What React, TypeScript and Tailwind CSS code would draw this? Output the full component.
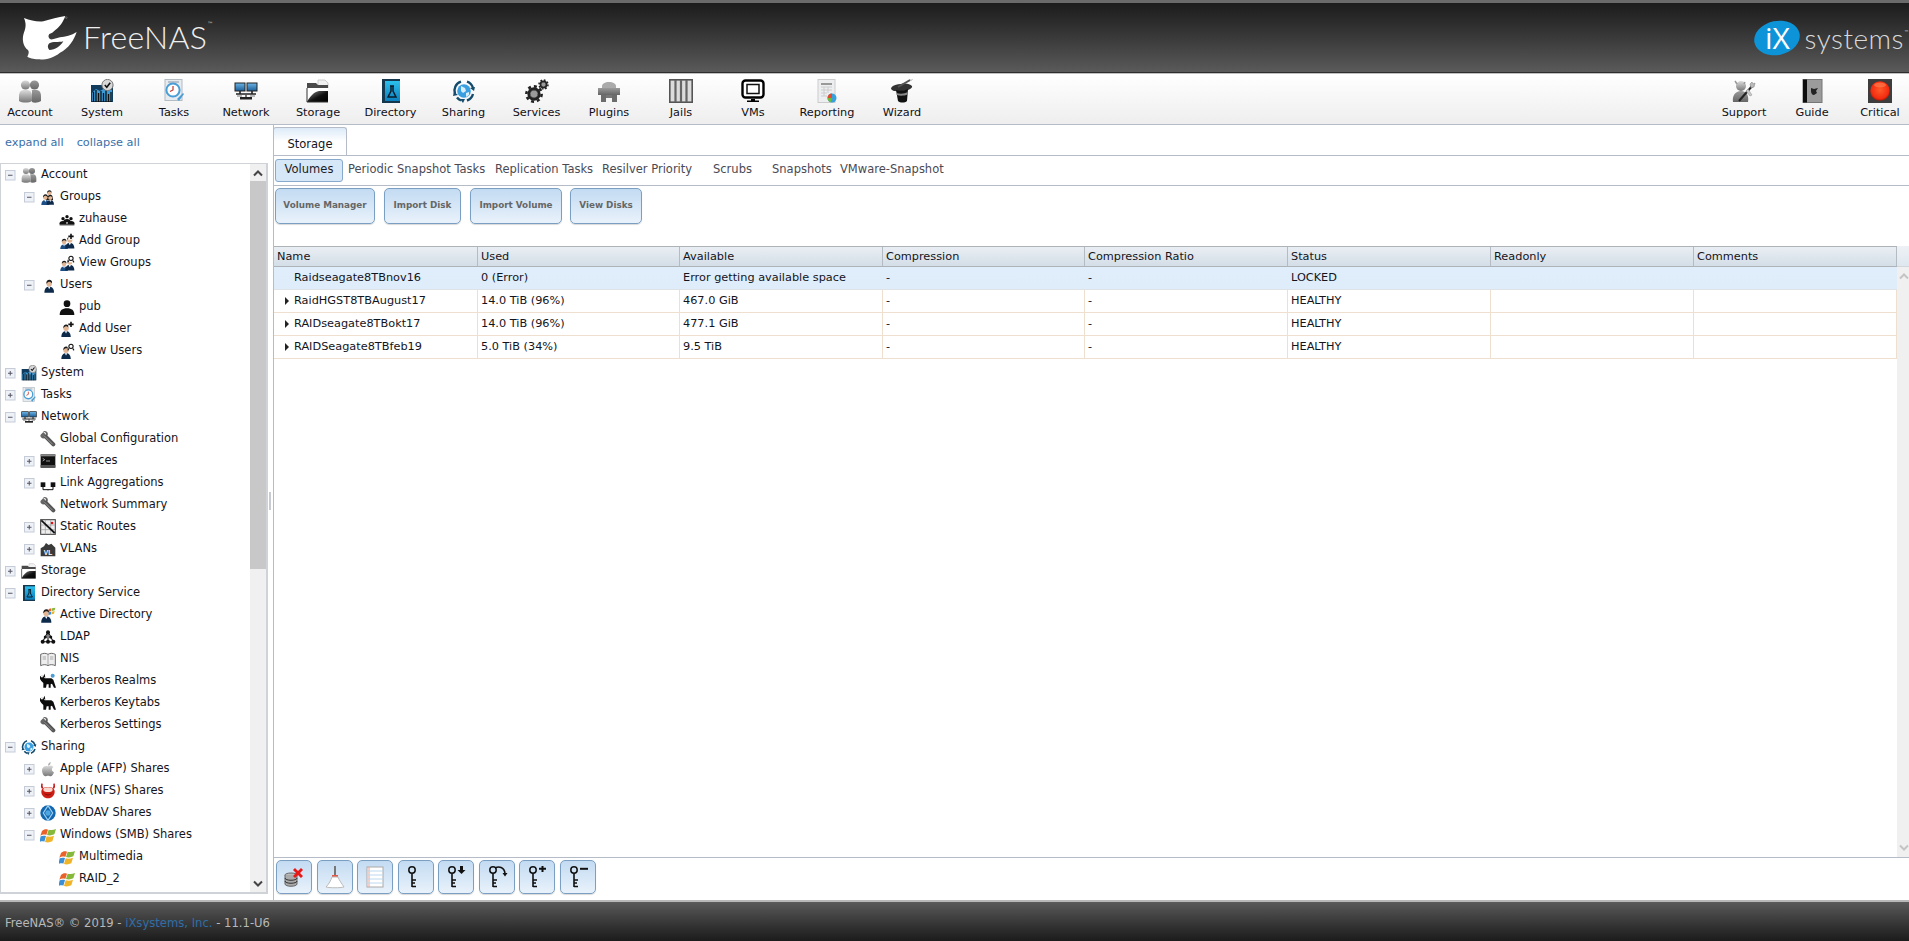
import React from "react";

const S = ({ s = 24, children }: { s?: number; children: React.ReactNode }) => (
  <svg width={s} height={s} viewBox="0 0 24 24" className="block shrink-0">{children}</svg>
);
type I = { s?: number };

const Defs = () => (
  <svg className="block h-0 w-0">
    <defs>
      <linearGradient id="gg" x1="0" y1="0" x2="0" y2="1"><stop offset="0" stopColor="#dcdcdc" /><stop offset="1" stopColor="#777" /></linearGradient>
      <linearGradient id="gd" x1="0" y1="0" x2="0" y2="1"><stop offset="0" stopColor="#9a9a9a" /><stop offset="1" stopColor="#666" /></linearGradient>
      <linearGradient id="gb" x1="0" y1="0" x2="0" y2="1"><stop offset="0" stopColor="#2cc0ee" /><stop offset="1" stopColor="#0b7fbd" /></linearGradient>
      <linearGradient id="gf" x1="0" y1="0" x2="1" y2="1"><stop offset="0" stopColor="#8a8a8a" /><stop offset="0.55" stopColor="#111" /><stop offset="1" stopColor="#000" /></linearGradient>
      <linearGradient id="gs" x1="0" y1="0" x2="0" y2="1"><stop offset="0" stopColor="#6bb6e8" /><stop offset="1" stopColor="#1b5d96" /></linearGradient>
      <radialGradient id="gr" cx="0.5" cy="0.45" r="0.55"><stop offset="0" stopColor="#ff5a2a" /><stop offset="0.8" stopColor="#f32c10" /><stop offset="1" stopColor="#a51808" /></radialGradient>
    </defs>
  </svg>
);

const Account = ({ s }: I) => (
  <S s={s}>
    <circle cx="7.5" cy="6" r="4.6" fill="url(#gg)" />
    <circle cx="16.5" cy="6" r="4.6" fill="url(#gd)" />
    <path d="M14 12c-1-1 0-1 2-1h2c3 0 5 2 5 6v5c-3 2-7 2-9 1z" fill="url(#gd)" />
    <path d="M1 17c0-4 2-6 5-6h3c3 0 5 2 5 6v5c-3 2-10 2-13 0z" fill="url(#gg)" />
  </S>
);
const Chart = ({ s }: I) => (
  <S s={s}>
    <rect x="1" y="6" width="22" height="17" fill="#123c5e" />
    <path d="M2 14l4-4 4 2 5-3 7 2v11H2z" fill="#3d9bd8" />
    <path d="M3.5 23V13M6 23V11M8.5 23v-9M11 23v-11M13.5 23V14M16 23V11M18.5 23v-8M21 23v-10" stroke="#111" strokeWidth="1.3" />
    <circle cx="17.5" cy="6" r="5.6" fill="#d8d8d8" stroke="#777" />
    <path d="M14.8 6l2 2.2 3.4-4.4" stroke="#111" strokeWidth="1.6" fill="none" />
  </S>
);
const Tasks = ({ s }: I) => (
  <S s={s}>
    <rect x="3" y="0.5" width="17" height="21" fill="#e6ebef" stroke="#b4bcc3" />
    <path d="M6 3h11" stroke="#a9b3bc" strokeWidth="1.5" />
    <circle cx="11" cy="11" r="6.6" fill="#fff" stroke="#4a9ed6" strokeWidth="2" />
    <path d="M11 7v4l-3 1.5" stroke="#c0392b" strokeWidth="1.2" fill="none" />
    <path d="M15 20l6-6 1 1-5 7z" fill="#4a9ed6" />
  </S>
);
const Network = ({ s }: I) => (
  <S s={s}>
    <rect x="1" y="4" width="10" height="8" fill="url(#gs)" stroke="#222" />
    <rect x="13" y="4" width="10" height="8" fill="url(#gs)" stroke="#222" />
    <path d="M6 12v3M18 12v3M2 15h20" stroke="#222" strokeWidth="1.6" />
    <path d="M12 15v3" stroke="#555" strokeWidth="1.6" />
    <rect x="6" y="18" width="12" height="2.5" fill="#222" />
    <path d="M3 17h5M16 17h5" stroke="#777" />
  </S>
);
const Folder = ({ s }: I) => (
  <S s={s}>
    <path d="M12 1h7l3 3v5H12z" fill="#f2f2f2" stroke="#ccc" />
    <path d="M1 4h9l2 2h10v17H1z" fill="#4a4a4a" />
    <path d="M1 9h21v14H1z" fill="#fff" />
    <path d="M1 23c3-6 7-10 12-11h9v11z" fill="url(#gf)" />
    <path d="M1 9v14h21" stroke="#333" fill="none" />
  </S>
);
const Book = ({ s }: I) => (
  <S s={s}>
    <rect x="3" y="0" width="18" height="24" fill="#16384f" />
    <rect x="6" y="2" width="15" height="20" fill="url(#gb)" />
    <path d="M11 7h4M12 7v5l-3 6h8l-3-6V7" fill="none" stroke="#0a1c2a" strokeWidth="1.5" />
  </S>
);
const Sharing = ({ s }: I) => (
  <S s={s}>
    <circle cx="12" cy="12" r="6.8" fill="#3a9fe0" />
    <path d="M9 7l4 2 1 3-3 2-2-2zM14 14l3-1 0 3-3 2z" fill="#d8eefb" />
    <path d="M3 15A9.5 9.5 0 0 1 9 2.7" fill="none" stroke="#144b6c" strokeWidth="2.4" />
    <path d="M15 2.7A9.5 9.5 0 0 1 21 9" fill="none" stroke="#144b6c" strokeWidth="2.4" />
    <path d="M21 15a9.5 9.5 0 0 1-6 6.5" fill="none" stroke="#144b6c" strokeWidth="2.4" />
    <path d="M9 21.5a9.5 9.5 0 0 1-4-3" fill="none" stroke="#144b6c" strokeWidth="2.4" />
    <path d="M18 9l5-1-1 4zM2 13l4 3-5 1zM11 24l-3-4 5 0z" fill="#144b6c" />
  </S>
);
const Gear = ({ cx, cy, r }: { cx: number; cy: number; r: number }) => (
  <g>
    <circle cx={cx} cy={cy} r={r * 0.78} fill="#222" />
    <circle cx={cx} cy={cy} r={r * 0.9} fill="none" stroke="#222" strokeWidth={r * 0.3} strokeDasharray={`${r * 0.35} ${r * 0.35}`} />
    <circle cx={cx} cy={cy} r={r * 0.45} fill="#9a9a9a" stroke="#444" strokeDasharray="1 0.8" />
  </g>
);
const Services = ({ s }: I) => (
  <S s={s}>
    <Gear cx={9} cy={15} r={8.5} />
    <Gear cx={18.5} cy={5.5} r={5} />
  </S>
);
const Plugins = ({ s }: I) => (
  <S s={s}>
    <path d="M5 7c0-2 3-4 7-4s7 2 7 4v2H5z" fill="#aaa" />
    <path d="M1 9h22v7H1z" fill="url(#gd)" />
    <path d="M4 16h5v7H4zM15 16h5v7h-5z" fill="#6c6c6c" />
    <path d="M9 16h6v3H9z" fill="#777" />
  </S>
);
const Jails = ({ s }: I) => (
  <S s={s}>
    <rect x="0.8" y="0.8" width="22.4" height="22.4" fill="#dcdcdc" stroke="#555" strokeWidth="1.6" />
    <path d="M6.5 1v22M12 1v22M17.5 1v22" stroke="#666" strokeWidth="2.2" />
  </S>
);
const VMs = ({ s }: I) => (
  <S s={s}>
    <rect x="1.5" y="1.5" width="21" height="17" rx="3" fill="#fff" stroke="#000" strokeWidth="2.4" />
    <rect x="6" y="5.5" width="12" height="9" fill="#fff" stroke="#111" strokeWidth="1.5" />
    <path d="M10 20h4v1.5H10zM6 21.5h12V23H6z" fill="#000" />
  </S>
);
const Reporting = ({ s }: I) => (
  <S s={s}>
    <rect x="3" y="0.5" width="17" height="23" fill="#eceef0" stroke="#ccc" />
    <path d="M6 5h11" stroke="#999" strokeWidth="2" />
    <path d="M6 8h11M6 11h11M6 14h6M6 17h6M9 8v9M13 8v6" stroke="#ccc" />
    <circle cx="17" cy="19" r="4.5" fill="#3aa0dc" />
    <path d="M17 19v-4.5a4.5 4.5 0 0 0-4.5 4.5z" fill="#e24c2a" />
    <path d="M17 19h-4.5a4.5 4.5 0 0 0 3 4.2z" fill="#6dbb3c" />
  </S>
);
const Wizard = ({ s }: I) => (
  <S s={s}>
    <path d="M1 9c2-3 6-4 10-4 5-1 9 0 11 2 1 2-4 5-10 5-6 1-11 0-11-3z" fill="#333" />
    <path d="M6 11c3 1 8 1 12-1l-1 12c-2 2-7 2-9 0z" fill="#111" />
    <path d="M6.500 14c3 1 8 1 11-1v2.500c-3 1.500-8 1.500-10.700.500z" fill="#888" />
    <path d="M8 8L22 0" stroke="#555" strokeWidth="2" />
    <path d="M20 1L22 0" stroke="#ddd" strokeWidth="2" />
  </S>
);
const Support = ({ s }: I) => (
  <S s={s}>
    <circle cx="9" cy="7" r="5" fill="url(#gg)" />
    <path d="M3 2l2 3M13 3l-1 2" stroke="#999" strokeWidth="1.5" />
    <path d="M1 23c-1-6 2-11 8-11s8 5 7 11z" fill="url(#gd)" />
    <path d="M7 22L21 6" stroke="#222" strokeWidth="2" />
    <path d="M19 9l3-1 1-4-2 1-1-2-2 2z" fill="#bbb" stroke="#777" strokeWidth=".5" />
    <path d="M14 12l4 5 2-1-4-6z" fill="#ccc" stroke="#888" strokeWidth=".5" />
  </S>
);
const Guide = ({ s }: I) => (
  <S s={s}>
    <rect x="3" y="0.5" width="19" height="23" fill="#9b9b9b" stroke="#777" />
    <rect x="3" y="0.5" width="4" height="23" fill="#0c0c0c" />
    <path d="M11 9l3 1 4-1-2 3 1 2-3 2c-2 0-3-2-3-4z" fill="#222" />
  </S>
);
const Critical = ({ s }: I) => (
  <S s={s}>
    <rect x="0" y="0" width="24" height="24" fill="#3d3d3d" />
    <circle cx="12" cy="12" r="9.8" fill="url(#gr)" />
    <ellipse cx="12" cy="6" rx="6" ry="2.5" fill="#ff8a5a" opacity=".55" />
  </S>
);

const Biz = ({ x = 12, sc = 1, c = "#0d2a4a" }: { x?: number; sc?: number; c?: string }) => (
  <g transform={`translate(${x} 0) scale(${sc}) translate(-12 0)`}>
    <path d="M4 24c0-7 3-10 8-10s8 3 8 10z" fill={c} />
    <path d="M10 14l2 4 2-4z" fill="#fff" />
    <circle cx="12" cy="9" r="4.6" fill="#e3b795" />
    <path d="M7.3 9c-.5-4 2-6.5 5-6.5s5 2 4.400 6c-1-2-3-3-5-3s-3 2-4.400 3.500z" fill="#1a1a1a" />
  </g>
);
const Groups = ({ s }: I) => (
  <S s={s}>
    <g transform="translate(7 0) scale(.7) translate(-2 0)"><Biz c="#1a1a1a" /></g>
    <g transform="translate(-1 6) scale(.75)"><Biz c="#1d4f86" /></g>
    <g transform="translate(7 7) scale(.7)"><Biz /></g>
  </S>
);
const User = ({ s }: I) => (
  <S s={s}>
    <g transform="translate(3 2) scale(.9)"><Biz /></g>
  </S>
);
const Sil = ({ x, y, k }: { x: number; y: number; k: number }) => (
  <g transform={`translate(${x} ${y}) scale(${k})`} fill="#111">
    <circle cx="12" cy="7" r="5" />
    <path d="M1 24c0-7 4-10 11-10s11 3 11 10z" />
  </g>
);
const Zuhause = ({ s }: I) => (
  <S s={s}>
    <Sil x={6} y={5} k={0.5} /><Sil x={0} y={8} k={0.5} /><Sil x={12} y={8} k={0.5} />
    <rect x="1" y="20" width="22" height="1.5" fill="#111" />
  </S>
);
const AddMark = () => <path d="M18 1v8M14 5h8" stroke="#111" strokeWidth="2.4" />;
const ViewMark = () => (
  <g>
    <circle cx="18" cy="5" r="3.2" fill="#fff" stroke="#111" strokeWidth="1.6" />
    <path d="M15 8l-2 3M20.500 8l2 3" stroke="#111" strokeWidth="1.6" />
  </g>
);
const AddGroup = ({ s }: I) => (
  <S s={s}><g transform="translate(-1 7) scale(.72)"><Biz c="#1d4f86" /></g><g transform="translate(6 3) scale(.85)"><Biz /></g><rect x="14" y="0" width="10" height="10" fill="#fff" /><AddMark /></S>
);
const ViewGroups = ({ s }: I) => (
  <S s={s}><g transform="translate(-1 7) scale(.72)"><Biz c="#1d4f86" /></g><g transform="translate(6 3) scale(.85)"><Biz /></g><rect x="13" y="0" width="11" height="11" fill="#fff" /><ViewMark /></S>
);
const PersonBlack = ({ s }: I) => <S s={s}><Sil x={0} y={0} k={1} /></S>;
const AddUser = ({ s }: I) => (
  <S s={s}><g transform="translate(0 3) scale(.88)"><Biz /></g><rect x="14" y="0" width="10" height="10" fill="#fff" /><AddMark /></S>
);
const ViewUser = ({ s }: I) => (
  <S s={s}><g transform="translate(0 3) scale(.88)"><Biz /></g><rect x="13" y="0" width="11" height="11" fill="#fff" /><ViewMark /></S>
);
const Wrench = ({ s }: I) => (
  <S s={s}>
    <path d="M1 5.500L5 1.500 8 5l-1 2 2-2-.5-2.500L4.500 0.500C9 -1 13 2 11.500 6.500L7 11C2.500 12 -0.500 9 1 5.500z" fill="#666" />
    <path d="M8.500 8.500L20 20" stroke="#555" strokeWidth="6" strokeLinecap="round" />
    <path d="M6 7l13 13" stroke="#999" strokeWidth="1.400" />
  </S>
);
const Terminal = ({ s }: I) => (
  <S s={s}>
    <rect x="1" y="2" width="22" height="20" fill="#111" />
    <rect x="1" y="2" width="22" height="3" fill="#888" />
    <path d="M4 8l3 2-3 2M9 12h6" stroke="#ddd" fill="none" />
    <rect x="1" y="18" width="22" height="4" fill="#555" />
  </S>
);
const LinkAgg = ({ s }: I) => (
  <S s={s}>
    <rect x="1" y="11" width="7" height="7" fill="#111" />
    <rect x="16" y="11" width="7" height="7" fill="#111" />
    <path d="M4.500 18v4h15v-4M12 22v1" fill="none" stroke="#111" strokeWidth="1.5" />
  </S>
);
const Routes = ({ s }: I) => (
  <S s={s}>
    <rect x="1" y="1" width="22" height="22" fill="#eee" stroke="#444" strokeWidth="1.6" />
    <path d="M1 9h22M1 16h22M8 1v22M16 1v22" stroke="#999" />
    <path d="M2 2l20 19" stroke="#111" strokeWidth="2.6" />
    <circle cx="18" cy="6" r="2" fill="#e01010" />
  </S>
);
const Vlan = ({ s }: I) => (
  <S s={s}>
    <path d="M1 11l5-3 3-5 4 3 4-2 6 6v13H1z" fill="#3a3a3a" />
    <text x="12" y="21" textAnchor="middle" fill="#fff" fontSize="10" fontWeight="700" fontFamily="'Liberation Sans',sans-serif">VL</text>
  </S>
);
const Win = ({ s }: I) => (
  <S s={s}>
    <path d="M3 6c3-3 6-3 9-2l-2.500 8c-3-1-6-1-9 1z" fill="#e8622a" />
    <path d="M13 4c3 1 7 1 11-1l-2.500 8c-4 2-8 2-11 1z" fill="#86b83a" />
    <path d="M1 14c3-1 5-1 8-.5L6.500 22c-2-1-4.500-1-7.500.500z" fill="#3a8fd6" />
    <path d="M10 14c3 1 7 1 11-1l-2.500 8.500c-4 2-8 2-11 1z" fill="#f0b428" />
  </S>
);
const AD = ({ s }: I) => (
  <S s={s}>
    <g transform="translate(-2 1) scale(.95)"><Biz /></g>
    <path d="M13 3l4-1 0 4-4 1z" fill="#e8622a" /><path d="M18 2l5-1-1 4-4 1z" fill="#86b83a" />
    <path d="M13 8l4-1 0 4-4 1z" fill="#3a8fd6" /><path d="M18 7l4-1-1 4-3 1z" fill="#f0b428" />
  </S>
);
const Ldap = ({ s }: I) => (
  <S s={s}>
    <path d="M12 4L4 19M12 4l8 15M4 19h16M12 4v15" stroke="#111" strokeWidth="1.6" fill="none" />
    <circle cx="12" cy="5" r="3" fill="#111" /><circle cx="4" cy="19" r="3" fill="#111" /><circle cx="12" cy="19" r="3" fill="#111" /><circle cx="20" cy="19" r="3" fill="#111" />
    <circle cx="8" cy="12" r="2.4" fill="#111" /><circle cx="16" cy="12" r="2.4" fill="#111" />
  </S>
);
const Nis = ({ s }: I) => (
  <S s={s}>
    <path d="M1 5c4-2 8-2 11 0 3-2 7-2 11 0v17c-4-2-8-2-11 0-3-2-7-2-11 0z" fill="#eee" stroke="#555" strokeWidth="1.3" />
    <path d="M12 5v17M4 9h5M4 12h5M15 9h5M15 12h5" stroke="#888" />
  </S>
);
const Dog = ({ mark, s }: I & { mark: string }) => (
  <S s={s}>
    <path d="M0 4l3 3 2-2 2 3h10l3 2 4 12h-3l-3-6-2 1v5h-3v-5H10l-1 5H5v-7l-3-3-2-3z" fill="#0c0c0c" />
    <path d="M1 3l4 2 2-4 1 6z" fill="#111" />
    <circle cx="19" cy="4" r="3" fill={mark} />
  </S>
);
const Apple = ({ s }: I) => (
  <S s={s}>
    <path d="M12 8c2-2 6-2 8 1-3 2-3 6 1 8-1 3-3 6-5 6-1.500 0-2-1-4-1s-2.500 1-4 1c-3 0-5-6-5-9 0-5 5-8 9-6z" fill="url(#gg)" />
    <path d="M12 7c0-3 2-5 4-5 0 3-2 5-4 5z" fill="#aaa" />
  </S>
);
const Nfs = ({ s }: I) => (
  <S s={s}>
    <path d="M3 1c-1 4-1 5 1 7M21 1c1 4 1 5-1 7" stroke="#c01818" strokeWidth="2.4" fill="none" />
    <path d="M2 13c0-5 5-7 10-7s10 2 10 7-4 10-10 10S2 18 2 13z" fill="#cc1e14" />
    <ellipse cx="12" cy="10" rx="7" ry="3.5" fill="#f9d8d0" />
    <path d="M6 15c4 3 8 3 12 0-2 5-10 5-12 0z" fill="#7d0d08" />
  </S>
);
const Dav = ({ s }: I) => (
  <S s={s}>
    <circle cx="12" cy="12" r="11.500" fill="#1268b0" />
    <path d="M12 1l7 11-7 11-7-11z" fill="none" stroke="#9fd0f2" strokeWidth="1.8" />
    <circle cx="12" cy="12" r="4" fill="#4da6e2" />
  </S>
);

const Shark = () => (
  <svg width="59" height="47" viewBox="30 14 177 141" className="block shrink-0">
    <path d="M42 26C62 34 82 38 100 36C122 30 145 23 166 20C158 40 150 52 136 62C130 68 126 72 118 74C112 82 118 92 128 90L150 84C165 82 185 78 200 68C192 92 176 118 150 130C130 146 105 152 85 150C78 150 62 148 52 142C56 134 58 128 54 122C40 112 36 92 40 76C44 62 52 50 42 26Z" fill="#fff" />
    <path d="M118 102C128 96 146 100 160 96C150 112 136 122 118 122C112 116 112 108 118 102Z" fill="#383838" />
    <circle cx="169" cy="25" r="2.500" fill="none" stroke="#bbb" />
  </svg>
);

const nav = [
  ["Account", Account, "w-[72px]"], ["System", Chart, "w-[72px]"], ["Tasks", Tasks, "w-[72px]"], ["Network", Network, "w-[72px]"],
  ["Storage", Folder, "w-[72px]"], ["Directory", Book, "w-[73px]"], ["Sharing", Sharing, "w-[73px]"], ["Services", Services, "w-[73px]"],
  ["Plugins", Plugins, "w-[72px]"], ["Jails", Jails, "w-[72px]"], ["VMs", VMs, "w-[72px]"], ["Reporting", Reporting, "w-[76px]"], ["Wizard", Wizard, "w-[74px]"],
] as const;

const NavItem = ({ label, Ic, cls }: { label: string; Ic: React.FC<I>; cls: string }) => (
  <div className={`${cls} flex shrink-0 flex-col items-center pt-[5px]`}>
    <div className="flex h-[27px] items-start"><Ic s={24} /></div>
    <div className="text-[11.3px] leading-[13px] whitespace-nowrap text-[#101018]">{label}</div>
  </div>
);

const Exp = ({ open }: { open: boolean }) => (
  <svg width="11" height="11" viewBox="0 0 11 11" className="block shrink-0">
    <rect x="0.5" y="0.5" width="9.500" height="9.500" fill="#eef2f7" stroke="#c5ccd8" />
    <path d="M3 5.250h4.500" stroke="#556" />
    {!open && <path d="M5.250 3v4.500" stroke="#556" />}
  </svg>
);

type TreeRow = [number, "o" | "c" | "", string, React.ReactNode];
const tree: TreeRow[] = [
  [0, "o", "Account", <Account s={16} />],
  [1, "o", "Groups", <Groups s={16} />],
  [2, "", "zuhause", <Zuhause s={16} />],
  [2, "", "Add Group", <AddGroup s={16} />],
  [2, "", "View Groups", <ViewGroups s={16} />],
  [1, "o", "Users", <User s={16} />],
  [2, "", "pub", <PersonBlack s={16} />],
  [2, "", "Add User", <AddUser s={16} />],
  [2, "", "View Users", <ViewUser s={16} />],
  [0, "c", "System", <Chart s={16} />],
  [0, "c", "Tasks", <Tasks s={16} />],
  [0, "o", "Network", <Network s={16} />],
  [1, "", "Global Configuration", <Wrench s={16} />],
  [1, "c", "Interfaces", <Terminal s={16} />],
  [1, "c", "Link Aggregations", <LinkAgg s={16} />],
  [1, "", "Network Summary", <Wrench s={16} />],
  [1, "c", "Static Routes", <Routes s={16} />],
  [1, "c", "VLANs", <Vlan s={16} />],
  [0, "c", "Storage", <Folder s={16} />],
  [0, "o", "Directory Service", <Book s={16} />],
  [1, "", "Active Directory", <AD s={16} />],
  [1, "", "LDAP", <Ldap s={16} />],
  [1, "", "NIS", <Nis s={16} />],
  [1, "", "Kerberos Realms", <Dog s={16} mark="#4a9ed6" />],
  [1, "", "Kerberos Keytabs", <Dog s={16} mark="#fff" />],
  [1, "", "Kerberos Settings", <Wrench s={16} />],
  [0, "o", "Sharing", <Sharing s={16} />],
  [1, "c", "Apple (AFP) Shares", <Apple s={16} />],
  [1, "c", "Unix (NFS) Shares", <Nfs s={16} />],
  [1, "c", "WebDAV Shares", <Dav s={16} />],
  [1, "o", "Windows (SMB) Shares", <Win s={16} />],
  [2, "", "Multimedia", <Win s={16} />],
  [2, "", "RAID_2", <Win s={16} />],
];
const pads = ["pl-[4px]", "pl-[23px]", "pl-[42px]"];

const Chev = ({ up, c = "#444" }: { up: boolean; c?: string }) => (
  <svg width="12" height="8" viewBox="0 0 12 8" className="block">
    <path d={up ? "M2 6.500L6 2.500l4 4" : "M2 1.500l4 4 4-4"} fill="none" stroke={c} strokeWidth="2" />
  </svg>
);

const btn = "rounded-[5px] border border-[#7a9fc2] bg-gradient-to-b from-[#c3dbf2] to-[#e9f2fb] shadow-[0_1px_1px_rgba(0,0,0,0.15)]";

const Key = ({ mark }: { mark?: React.ReactNode }) => (
  <svg width="24" height="24" viewBox="0 0 24 24" className="block">
    <circle cx="8" cy="5" r="3.2" fill="none" stroke="#111" strokeWidth="1.5" />
    <path d="M8 8.500V22M8 15h4M8 18h3M8 21.500h4" stroke="#111" strokeWidth="1.6" fill="none" />
    {mark}
  </svg>
);

const cols = ["Name", "Used", "Available", "Compression", "Compression Ratio", "Status", "Readonly", "Comments"];
const rows = [
  ["Raidseagate8TBnov16", "0 (Error)", "Error getting available space", "-", "-", "LOCKED", "", ""],
  ["RaidHGST8TBAugust17", "14.0 TiB (96%)", "467.0 GiB", "-", "-", "HEALTHY", "", ""],
  ["RAIDseagate8TBokt17", "14.0 TiB (96%)", "477.1 GiB", "-", "-", "HEALTHY", "", ""],
  ["RAIDSeagate8TBfeb19", "5.0 TiB (34%)", "9.5 TiB", "-", "-", "HEALTHY", "", ""],
];
const grid = "grid grid-cols-[204px_202px_203px_202px_203px_203px_203px_203px]";

export default function App() {
  return (
    <div className="flex h-[941px] w-[1909px] flex-col overflow-hidden bg-white text-[11.5px] text-black [font-family:'DejaVu_Sans',sans-serif]">
      <Defs />
      <header className="flex h-[73px] shrink-0 items-center justify-between border-t-[3px] border-b-[1px] border-t-[#6a6a6a] border-b-[#2e2e2e] bg-gradient-to-b from-[#1c1c1c] to-[#5a5a5a]">
        <div className="flex items-start pl-[20px]">
          <Shark />
          <div className="mt-[3px] ml-[4px] text-[32px] leading-[40px] font-light tracking-[0.3px] text-[#efefef] [font-family:Lato,sans-serif]">FreeNAS</div>
          <div className="mt-[6px] text-[6px] leading-[8px] text-[#ddd]">™</div>
        </div>
        <div className="flex items-center">
          <div className="flex h-[34px] w-[46px] -rotate-12 items-center justify-center rounded-[50%] bg-[#0d94d8]">
            <span className="rotate-12 text-[30px] leading-[30px] font-normal text-white [font-family:'Open_Sans',sans-serif]">iX</span>
          </div>
          <span className="ml-[5px] text-[28px] leading-[34px] font-light tracking-[0.5px] text-[#d9d9d9] [font-family:Lato,sans-serif]">systems</span>
          <span className="mb-[10px] text-[5px] text-[#ddd]">™</span>
        </div>
      </header>

      <nav className="flex h-[52px] shrink-0 border-t border-b border-t-[#c0c0c0] border-b-[#b5bcc7] bg-gradient-to-b from-[#ffffff] to-[#eeeeee]">
        <div className="ml-[-6px] flex">
          {nav.map(([l, Ic, c]) => <NavItem key={l} label={l} Ic={Ic} cls={c} />)}
        </div>
        <div className="ml-auto flex">
          <NavItem label="Support" Ic={Support} cls="w-[70px]" />
          <NavItem label="Guide" Ic={Guide} cls="w-[66px]" />
          <div className="ml-[6px]"><NavItem label="Critical" Ic={Critical} cls="w-[58px]" /></div>
        </div>
      </nav>

      <main className="flex min-h-0 flex-1">
        <aside className="flex w-[268px] shrink-0 flex-col">
          <div className="flex h-[38px] shrink-0 gap-[13px] pt-[11px] pl-[5px] text-[11.3px] leading-[14px] text-[#3a6fa8]">
            <span>expand all</span><span>collapse all</span>
          </div>
          <div className="flex h-[731px] shrink-0 border-[2px] border-t-[1px] border-[#cfd2d6] border-l-[1px]">
            <div className="min-w-0 flex-1">
              {tree.map(([lv, st, label, icon]) => (
                <div key={label} className={`flex h-[22px] items-center ${pads[lv]}`}>
                  <div className="mr-[5px] w-[11px] shrink-0">{st && <Exp open={st === "o"} />}</div>
                  <div className="mr-[4px] shrink-0">{icon}</div>
                  <span className="whitespace-nowrap text-[#141420]">{label}</span>
                </div>
              ))}
            </div>
            <div className="flex w-[16px] shrink-0 flex-col bg-[#f0f0f0]">
              <div className="flex h-[17px] items-center justify-center"><Chev up /></div>
              <div className="h-[388px] bg-[#c8c8c8]" />
              <div className="mt-auto flex h-[17px] items-center justify-center"><Chev up={false} /></div>
            </div>
          </div>
        </aside>

        <div className="flex w-[5px] shrink-0 items-center">
          <div className="ml-[1px] mb-[24px] h-[18px] w-[2px] bg-[#c8ccd2]" />
        </div>

        <section className="flex min-w-0 flex-1 flex-col border-l border-l-[#b5bcc7]">
          <div className="flex h-[31px] shrink-0 items-end border-b border-b-[#b5bcc7] pt-[3px]">
            <div className="ml-[-1px] flex h-[28px] w-[74px] items-center justify-center rounded-t-[3px] border border-b-0 border-[#b5bcc7] bg-gradient-to-b from-[#dcebf8] via-white to-white pt-[6px] text-[#14141c]">Storage</div>
          </div>
          <div className="flex h-[30px] shrink-0 items-center border-b border-b-[#b5bcc7] pb-[1px] pl-[1px] text-[#4a4a55]">
            <div className="mr-[5px] flex h-[23px] w-[68px] items-center justify-center rounded-[3px] border border-[#86a9cc] bg-[#d6e7f7] text-[#1c1c24]">Volumes</div>
            <div className="w-[147px]">Periodic Snapshot Tasks</div>
            <div className="w-[107px]">Replication Tasks</div>
            <div className="w-[111px]">Resilver Priority</div>
            <div className="w-[59px]">Scrubs</div>
            <div className="w-[68px]">Snapshots</div>
            <div>VMware-Snapshot</div>
          </div>
          <div className="flex h-[60px] shrink-0 items-start gap-[8px] pt-[2px] pl-[1px] text-[8.8px] font-bold text-[#666]">
            <div className={`mr-[1px] flex h-[36px] w-[100px] items-center justify-center ${btn}`}>Volume Manager</div>
            <div className={`mr-[1px] flex h-[36px] w-[77px] items-center justify-center ${btn}`}>Import Disk</div>
            <div className={`flex h-[36px] w-[92px] items-center justify-center ${btn}`}>Import Volume</div>
            <div className={`flex h-[36px] w-[72px] items-center justify-center ${btn}`}>View Disks</div>
          </div>

          <div className="flex h-[21px] shrink-0 text-[11.3px]">
            <div className={`${grid} flex-1 border-t border-b border-[#adb3b9] bg-gradient-to-b from-[#e9eef3] to-[#d4dee7]`}>
              {cols.map((c) => (
                <div key={c} className="flex items-center border-r border-r-[#b5bbc2] pt-[1px] pl-[3px] text-[#14141c]">{c}</div>
              ))}
            </div>
            <div className="w-[13px] border-b border-b-[#d0d6dc] bg-gradient-to-b from-[#eef2f6] to-[#dfe7ef]" />
          </div>

          <div className="flex min-h-0 flex-1 text-[11.3px]">
            <div className="flex-1">
              {rows.map((r, i) => (
                <div key={r[0]} className={`${grid} h-[23px] border-b ${i === 0 ? "border-b-[#dfe3e6] bg-gradient-to-b from-[#e0eefb] to-[#dfedfa]" : "border-b-[#efdfcf]"}`}>
                  {r.map((c, j) => (
                    <div key={j} className={`flex items-center whitespace-nowrap border-r pl-[3px] text-[#14141c] ${i === 0 ? "border-r-transparent" : "border-r-[#efdfcf]"}`}>
                      {j === 0 && (
                        <span className="flex w-[17px] shrink-0 items-center justify-end pr-[4px]">
                          {i > 0 && <svg width="6" height="8" viewBox="0 0 6 8" className="block"><path d="M1 0l4 4-4 4z" fill="#222" /></svg>}
                        </span>
                      )}
                      {c}
                    </div>
                  ))}
                </div>
              ))}
            </div>
            <div className="flex w-[13px] shrink-0 flex-col items-center bg-[#f0f0f0] py-[5px]">
              <Chev up c="#c4c4c4" />
              <div className="mt-auto"><Chev up={false} c="#c4c4c4" /></div>
            </div>
          </div>

          <div className="flex h-[43px] shrink-0 items-start gap-[4.500px] border-t border-t-[#b5bcc7] pt-[2px] pl-[2px]">
            <div className={`flex h-[34px] w-[36px] items-center justify-center ${btn}`}>
              <svg width="26" height="24" viewBox="0 0 26 24" className="block">
                <ellipse cx="10" cy="10" rx="6" ry="2" fill="#bbb" stroke="#666" />
                <path d="M4 10v9c0 3 12 3 12 0v-9" fill="#aaa" stroke="#666" />
                <path d="M4 13c0 3 12 3 12 0M4 16c0 3 12 3 12 0" fill="none" stroke="#333" />
                <path d="M14 3l3 3 3-3 2 2-3 3 3 3-2 2-3-3-3 3-2-2 3-3-3-3z" fill="#e81818" />
              </svg>
            </div>
            <div className={`flex h-[34px] w-[36px] items-center justify-center ${btn}`}>
              <svg width="24" height="24" viewBox="0 0 24 24" className="block">
                <path d="M11 1h2v9h-2z" fill="#777" />
                <path d="M9 10h6v2H9z" fill="#e65a4a" />
                <path d="M9 12h6c1 3 4 7 6 10-4 1-14 1-18 0 3-3 5-7 6-10z" fill="#fff" stroke="#bbb" />
              </svg>
            </div>
            <div className={`flex h-[34px] w-[36px] items-center justify-center ${btn}`}>
              <svg width="24" height="24" viewBox="0 0 24 24" className="block">
                <rect x="4" y="2" width="16" height="20" fill="#fff" stroke="#aaa" />
                <path d="M6 2v20" stroke="#e8a090" />
                <path d="M4 6h16M4 10h16M4 14h16M4 18h16" stroke="#bcd8ee" />
              </svg>
            </div>
            <div className={`flex h-[34px] w-[36px] items-center justify-center ${btn}`}><Key /></div>
            <div className={`flex h-[34px] w-[36px] items-center justify-center ${btn}`}><Key mark={<path d="M16 1h3v4h2.500l-4 4-4-4H16z" fill="#111" />} /></div>
            <div className={`flex h-[34px] w-[36px] items-center justify-center ${btn}`}><Key mark={<g><path d="M10 3c4-2 9-1 10 5" fill="none" stroke="#111" strokeWidth="1.6" /><path d="M17.500 8h5l-2.500 3.500z" fill="#111" /></g>} /></div>
            <div className={`flex h-[34px] w-[36px] items-center justify-center ${btn}`}><Key mark={<path d="M14 3.800h7M17.500 1v6" stroke="#111" strokeWidth="2" />} /></div>
            <div className={`flex h-[34px] w-[36px] items-center justify-center ${btn}`}><Key mark={<path d="M14 3.800h8" stroke="#111" strokeWidth="2" />} /></div>
          </div>
        </section>
      </main>

      <footer className="flex h-[41px] shrink-0 items-center border-t-[2px] border-t-[#b8b8b8] bg-gradient-to-b from-[#5a5a5a] to-[#1c1c1c] pt-[4px] pl-[5px] text-[11.6px] text-[#b8b8b8]">
        <span>FreeNAS® © 2019 - <span className="text-[#2f6ea6]">iXsystems, Inc.</span> - 11.1-U6</span>
      </footer>
    </div>
  );
}
